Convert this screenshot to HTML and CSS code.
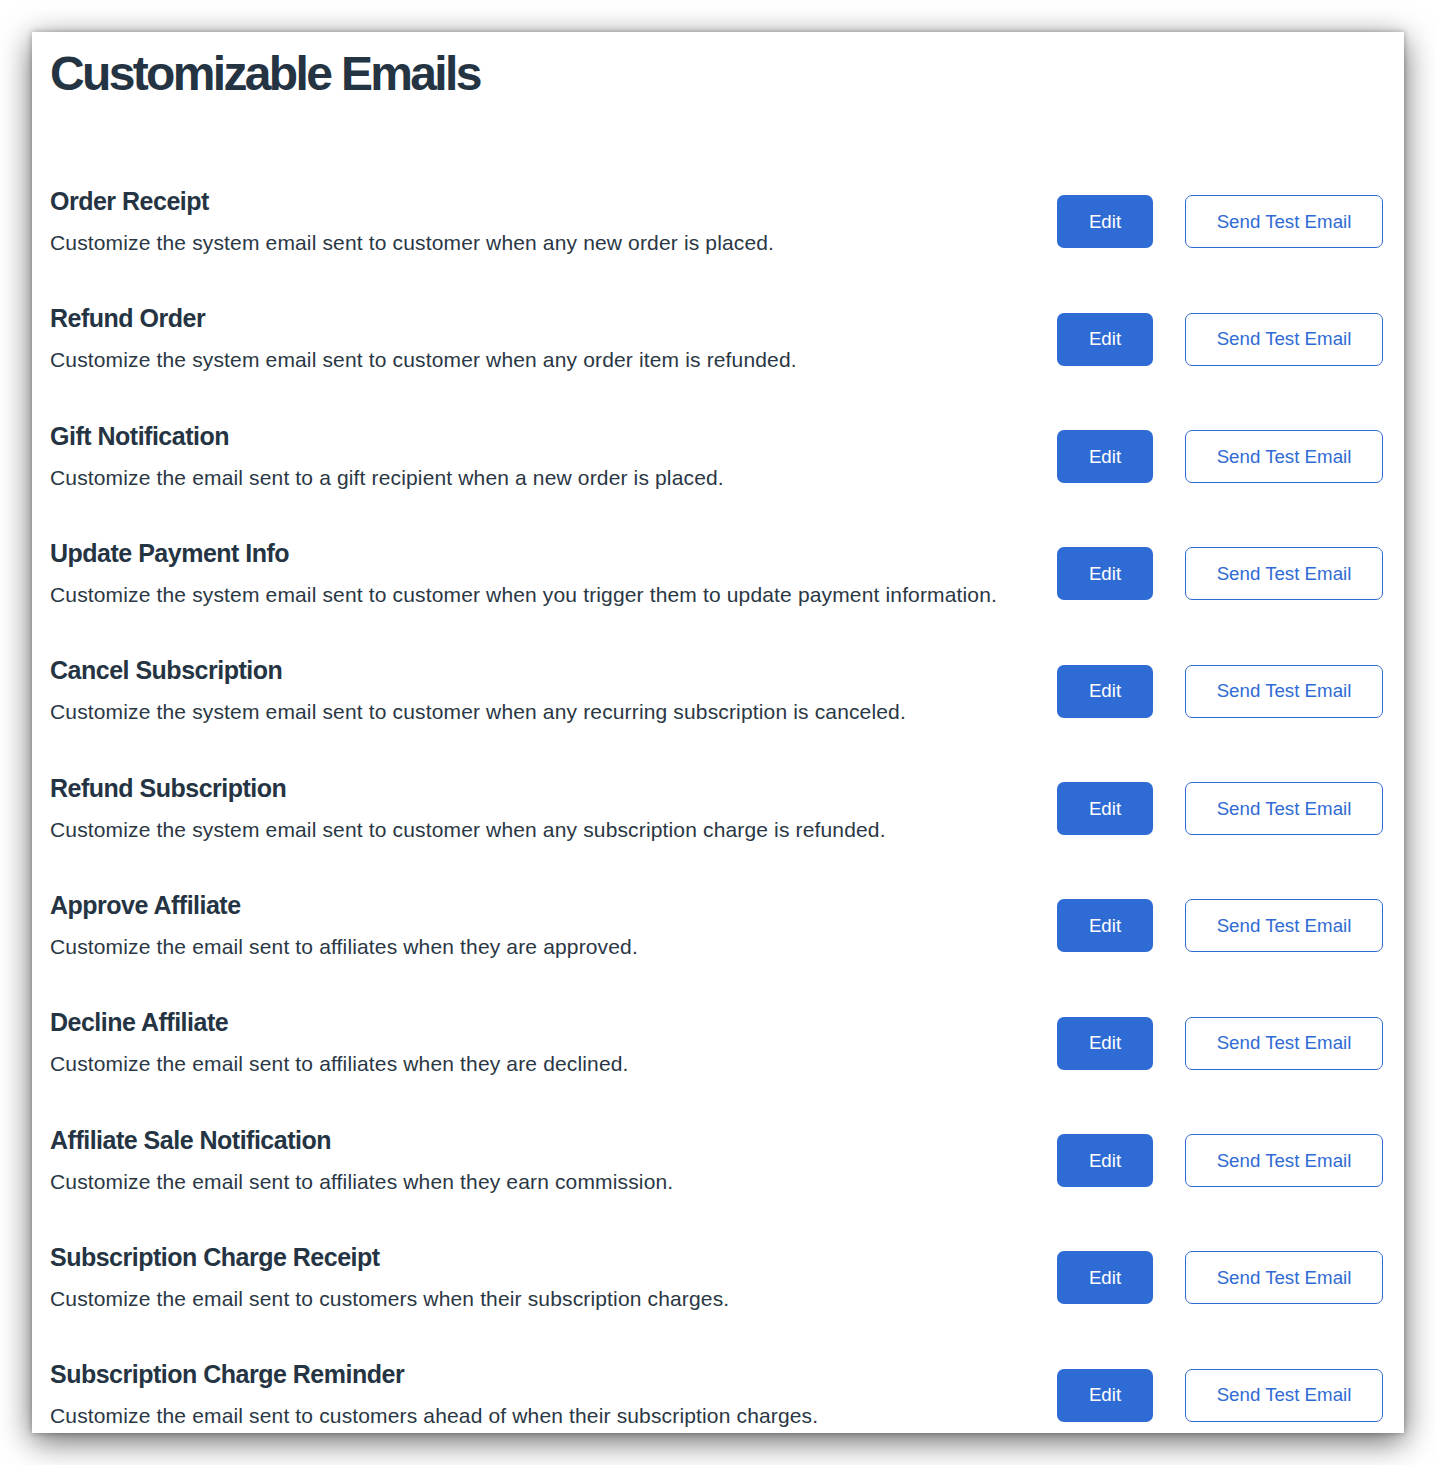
FILE: index.html
```html
<!DOCTYPE html>
<html lang="en">
<head>
<meta charset="utf-8">
<title>Customizable Emails</title>
<link rel="stylesheet" href="styles.css">
</head>
<body>
<div class="window">
  <h1 class="page-title">Customizable Emails</h1>
  <div class="list">
    <div class="row">
      <div class="info">
        <h2 class="row-title">Order Receipt</h2>
        <p class="row-desc">Customize the system email sent to customer when any new order is placed.</p>
      </div>
      <div class="actions"><button class="btn btn-primary">Edit</button><button class="btn btn-outline">Send Test Email</button></div>
    </div>
    <div class="row">
      <div class="info">
        <h2 class="row-title">Refund Order</h2>
        <p class="row-desc">Customize the system email sent to customer when any order item is refunded.</p>
      </div>
      <div class="actions"><button class="btn btn-primary">Edit</button><button class="btn btn-outline">Send Test Email</button></div>
    </div>
    <div class="row">
      <div class="info">
        <h2 class="row-title">Gift Notification</h2>
        <p class="row-desc">Customize the email sent to a gift recipient when a new order is placed.</p>
      </div>
      <div class="actions"><button class="btn btn-primary">Edit</button><button class="btn btn-outline">Send Test Email</button></div>
    </div>
    <div class="row">
      <div class="info">
        <h2 class="row-title">Update Payment Info</h2>
        <p class="row-desc">Customize the system email sent to customer when you trigger them to update payment information.</p>
      </div>
      <div class="actions"><button class="btn btn-primary">Edit</button><button class="btn btn-outline">Send Test Email</button></div>
    </div>
    <div class="row">
      <div class="info">
        <h2 class="row-title">Cancel Subscription</h2>
        <p class="row-desc">Customize the system email sent to customer when any recurring subscription is canceled.</p>
      </div>
      <div class="actions"><button class="btn btn-primary">Edit</button><button class="btn btn-outline">Send Test Email</button></div>
    </div>
    <div class="row">
      <div class="info">
        <h2 class="row-title">Refund Subscription</h2>
        <p class="row-desc">Customize the system email sent to customer when any subscription charge is refunded.</p>
      </div>
      <div class="actions"><button class="btn btn-primary">Edit</button><button class="btn btn-outline">Send Test Email</button></div>
    </div>
    <div class="row">
      <div class="info">
        <h2 class="row-title">Approve Affiliate</h2>
        <p class="row-desc">Customize the email sent to affiliates when they are approved.</p>
      </div>
      <div class="actions"><button class="btn btn-primary">Edit</button><button class="btn btn-outline">Send Test Email</button></div>
    </div>
    <div class="row">
      <div class="info">
        <h2 class="row-title">Decline Affiliate</h2>
        <p class="row-desc">Customize the email sent to affiliates when they are declined.</p>
      </div>
      <div class="actions"><button class="btn btn-primary">Edit</button><button class="btn btn-outline">Send Test Email</button></div>
    </div>
    <div class="row">
      <div class="info">
        <h2 class="row-title">Affiliate Sale Notification</h2>
        <p class="row-desc">Customize the email sent to affiliates when they earn commission.</p>
      </div>
      <div class="actions"><button class="btn btn-primary">Edit</button><button class="btn btn-outline">Send Test Email</button></div>
    </div>
    <div class="row">
      <div class="info">
        <h2 class="row-title">Subscription Charge Receipt</h2>
        <p class="row-desc">Customize the email sent to customers when their subscription charges.</p>
      </div>
      <div class="actions"><button class="btn btn-primary">Edit</button><button class="btn btn-outline">Send Test Email</button></div>
    </div>
    <div class="row">
      <div class="info">
        <h2 class="row-title">Subscription Charge Reminder</h2>
        <p class="row-desc">Customize the email sent to customers ahead of when their subscription charges.</p>
      </div>
      <div class="actions"><button class="btn btn-primary">Edit</button><button class="btn btn-outline">Send Test Email</button></div>
    </div>
  </div>
</div>
</body>
</html>
```
FILE: styles.css
```css
html, body {
  margin: 0;
  padding: 0;
  background: #ffffff;
}
body {
  padding: 32px;
  font-family: "Liberation Sans", Arial, sans-serif;
  color: #263443;
}
.window {
  width: 1372px;
  height: 1401px;
  box-sizing: border-box;
  background: #ffffff;
  overflow: hidden;
  padding: 0 21px 0 18px;
  box-shadow: 0 8px 30px rgba(0, 0, 0, 0.6), 0 0 6px rgba(0, 0, 0, 0.3);
}
.page-title {
  margin: 0;
  padding-top: 14px;
  height: 131.33px;
  box-sizing: border-box;
  font-size: 48px;
  line-height: 56px;
  font-weight: 700;
  letter-spacing: -2.65px;
  color: #253443;
}
.list {
  display: flex;
  flex-direction: column;
}
.row {
  display: flex;
  align-items: center;
  justify-content: space-between;
  height: 117.33px;
}
.info {
  display: flex;
  flex-direction: column;
  padding-bottom: 3px;
}
.row-title {
  margin: 0;
  font-size: 25px;
  line-height: 30px;
  font-weight: 700;
  letter-spacing: -0.5px;
  color: #253443;
}
.row-desc {
  margin: 15px 0 0;
  font-size: 21px;
  line-height: 24px;
  letter-spacing: 0.15px;
  color: #2a3744;
}
.actions {
  display: flex;
  gap: 32px;
}
.btn {
  height: 53px;
  box-sizing: border-box;
  border-radius: 7px;
  font-family: "Liberation Sans", Arial, sans-serif;
  font-size: 18.7px;
  cursor: pointer;
}
.btn-primary {
  width: 96px;
  background: #2f6bd4;
  border: none;
  color: #ffffff;
}
.btn-outline {
  width: 198px;
  background: #ffffff;
  border: 1px solid #2f6bd4;
  color: #2f6bd4;
}
```
